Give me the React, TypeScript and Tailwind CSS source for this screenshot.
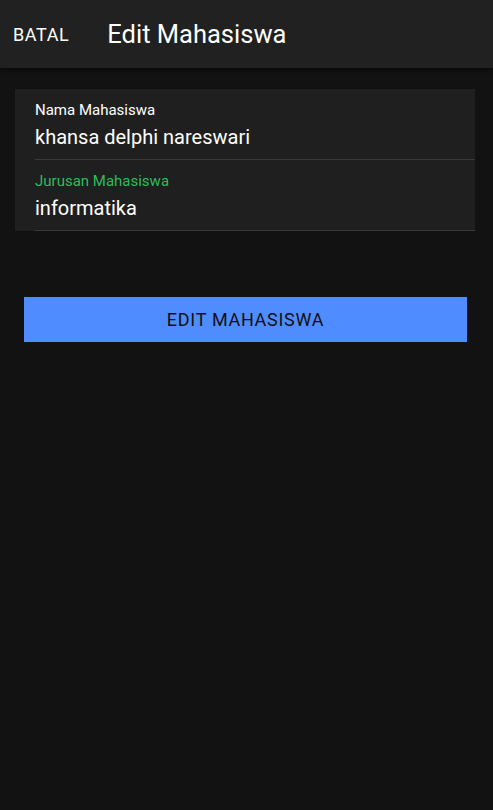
export default function App() {
  return (
    <div
      className="min-h-[810px] bg-[#121212] text-white"
      style={{ fontFamily: "Roboto, 'Liberation Sans', sans-serif" }}
    >
      {/* Header */}
      <div className="h-[68px] bg-[#212121] flex items-center shadow-[0_2px_4px_rgba(0,0,0,0.5)]">
        <button className="ml-[13px] text-[18px] tracking-[0.6px] text-white">
          BATAL
        </button>
        <h1 className="ml-[38px] text-[25.5px] text-white">Edit Mahasiswa</h1>
      </div>

      {/* Form */}
      <div className="mx-[15px] mt-[21px] bg-[#1f1f1f] pl-[20px] w-[460px]">
        <div className="h-[71px] border-b border-[#3a3a3a] pt-[12px]">
          <div className="text-[15px] leading-[18px] text-white">Nama Mahasiswa</div>
          <div className="text-[20px] leading-[24px] mt-[6px]">khansa delphi nareswari</div>
        </div>
        <div className="h-[71px] border-b border-[#3a3a3a] pt-[12px]">
          <div className="text-[15px] leading-[18px] text-[#2dbd5b]">Jurusan Mahasiswa</div>
          <div className="text-[20px] leading-[24px] mt-[6px]">informatika</div>
        </div>
      </div>

      {/* Button */}
      <div className="px-[24px] mt-[66px] w-[491px]">
        <button className="w-full h-[45px] bg-[#4f8cff] text-[#111111] text-[18px] tracking-[0.7px]">
          EDIT MAHASISWA
        </button>
      </div>
    </div>
  );
}
